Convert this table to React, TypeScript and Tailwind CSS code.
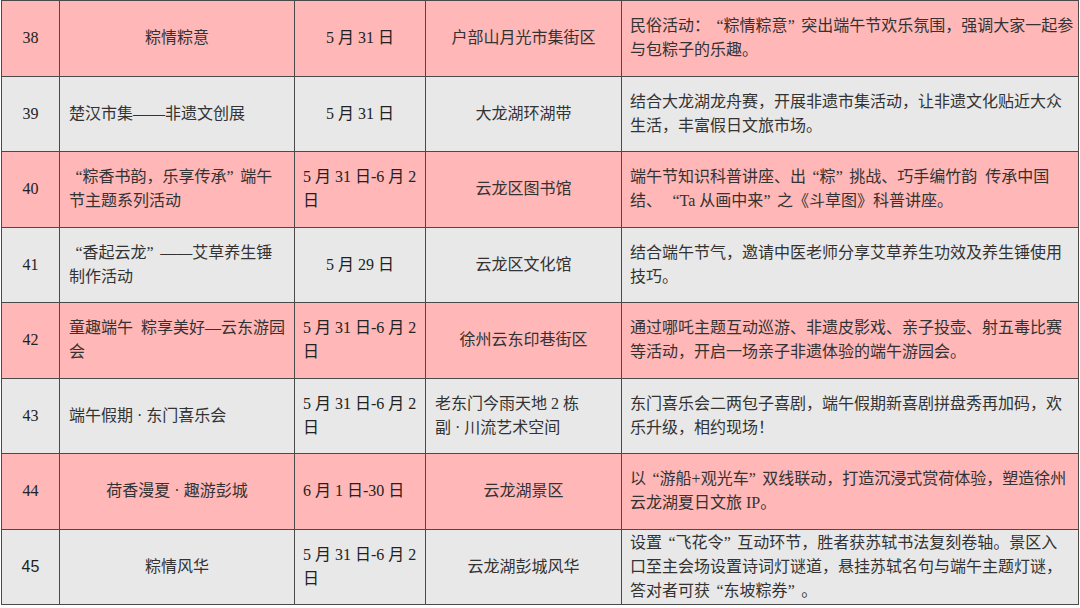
import React from "react";

type Row = {
  no: string;
  name: string[];
  nameCenter: boolean;
  date: string[];
  dateCenter: boolean;
  place: string[];
  placeCenter: boolean;
  desc: string[];
  sansNo?: boolean;
};

const rows: Row[] = [
  {
    no: "38",
    name: ["粽情粽意"],
    nameCenter: true,
    date: ["5 月 31 日"],
    dateCenter: true,
    place: ["户部山月光市集街区"],
    placeCenter: true,
    desc: ["民俗活动：“粽情粽意”突出端午节欢乐氛围，强调大家一起参", "与包粽子的乐趣。"],
  },
  {
    no: "39",
    name: ["楚汉市集——非遗文创展"],
    nameCenter: false,
    date: ["5 月 31 日"],
    dateCenter: true,
    place: ["大龙湖环湖带"],
    placeCenter: true,
    desc: ["结合大龙湖龙舟赛，开展非遗市集活动，让非遗文化贴近大众", "生活，丰富假日文旅市场。"],
  },
  {
    no: "40",
    name: ["“粽香书韵，乐享传承”端午", "节主题系列活动"],
    nameCenter: false,
    date: ["5 月 31 日-6 月 2", "日"],
    dateCenter: false,
    place: ["云龙区图书馆"],
    placeCenter: true,
    desc: ["端午节知识科普讲座、出“粽”挑战、巧手编竹韵  传承中国", "结、 “Ta 从画中来”之《斗草图》科普讲座。"],
  },
  {
    no: "41",
    name: ["“香起云龙”——艾草养生锤", "制作活动"],
    nameCenter: false,
    date: ["5 月 29 日"],
    dateCenter: true,
    place: ["云龙区文化馆"],
    placeCenter: true,
    desc: ["结合端午节气，邀请中医老师分享艾草养生功效及养生锤使用", "技巧。"],
  },
  {
    no: "42",
    name: ["童趣端午  粽享美好—云东游园", "会"],
    nameCenter: false,
    date: ["5 月 31 日-6 月 2", "日"],
    dateCenter: false,
    place: ["徐州云东印巷街区"],
    placeCenter: true,
    desc: ["通过哪吒主题互动巡游、非遗皮影戏、亲子投壶、射五毒比赛", "等活动，开启一场亲子非遗体验的端午游园会。"],
  },
  {
    no: "43",
    name: ["端午假期 · 东门喜乐会"],
    nameCenter: false,
    date: ["5 月 31 日-6 月 2", "日"],
    dateCenter: false,
    place: ["老东门今雨天地 2 栋", "副 · 川流艺术空间"],
    placeCenter: false,
    desc: ["东门喜乐会二两包子喜剧，端午假期新喜剧拼盘秀再加码，欢", "乐升级，相约现场！"],
  },
  {
    no: "44",
    name: ["荷香漫夏 · 趣游彭城"],
    nameCenter: true,
    date: ["6 月 1 日-30 日"],
    dateCenter: false,
    place: ["云龙湖景区"],
    placeCenter: true,
    desc: ["以“游船+观光车”双线联动，打造沉浸式赏荷体验，塑造徐州", "云龙湖夏日文旅 IP。"],
  },
  {
    no: "45",
    name: ["粽情风华"],
    nameCenter: true,
    date: ["5 月 31 日-6 月 2", "日"],
    dateCenter: false,
    place: ["云龙湖彭城风华"],
    placeCenter: true,
    desc: [
      "设置“飞花令”互动环节，胜者获苏轼书法复刻卷轴。景区入",
      "口至主会场设置诗词灯谜道，悬挂苏轼名句与端午主题灯谜，",
      "答对者可获“东坡粽券”。",
    ],
    sansNo: true,
  },
];

// wide quotes, like the song-style font in the source document
function Text({ s }: { s: string }) {
  const parts = s.split(/([“”])/);
  return (
    <>
      {parts.map((p, i) =>
        p === "“" ? (
          <span key={i} className="inline-block w-[0.85em] text-right">
            “
          </span>
        ) : p === "”" ? (
          <span key={i} className="inline-block w-[0.85em] text-left">
            ”
          </span>
        ) : (
          <React.Fragment key={i}>{p}</React.Fragment>
        )
      )}
    </>
  );
}

function Lines({ lines }: { lines: string[] }) {
  return (
    <>
      {lines.map((l, i) => (
        <div key={i} className="whitespace-pre">
          <Text s={l} />
        </div>
      ))}
    </>
  );
}

export default function App() {
  return (
    <div
      lang="zh-CN"
      className="w-[1080px] h-[608px] bg-white overflow-hidden text-[16px] leading-[24px] text-[#333]"
      style={{ fontFamily: '"Liberation Serif", "Noto Sans CJK SC", serif' }}
    >
      <table className="table-fixed border-collapse ml-px w-[1077px]">
        <colgroup>
          <col className="w-[58px]" />
          <col className="w-[235px]" />
          <col className="w-[131px]" />
          <col className="w-[196px]" />
          <col className="w-[457px]" />
        </colgroup>
        <tbody>
          {rows.map((r, i) => (
            <tr
              key={r.no}
              className={`h-[75.5px] ${i % 2 === 0 ? "bg-[#ffb7b7]" : "bg-[#e8e8e8]"}`}
            >
              <td
                className={`border border-[#4a4a4a] text-center align-middle text-[#222] ${
                  r.sansNo ? "font-['Liberation_Sans']" : ""
                }`}
              >
                {r.no}
              </td>
              <td
                className={`border border-[#4a4a4a] align-middle px-[9px] ${
                  r.nameCenter ? "text-center" : "text-left"
                }`}
              >
                <Lines lines={r.name} />
              </td>
              <td
                className={`border border-[#4a4a4a] align-middle px-[8px] text-[#222] ${
                  r.dateCenter ? "text-center" : "text-left"
                }`}
              >
                <Lines lines={r.date} />
              </td>
              <td
                className={`border border-[#4a4a4a] align-middle px-[9px] ${
                  r.placeCenter ? "text-center" : "text-left"
                }`}
              >
                <Lines lines={r.place} />
              </td>
              <td className="border border-[#4a4a4a] align-middle pl-[8px] pr-0 text-left">
                <Lines lines={r.desc} />
              </td>
            </tr>
          ))}
        </tbody>
      </table>
    </div>
  );
}
